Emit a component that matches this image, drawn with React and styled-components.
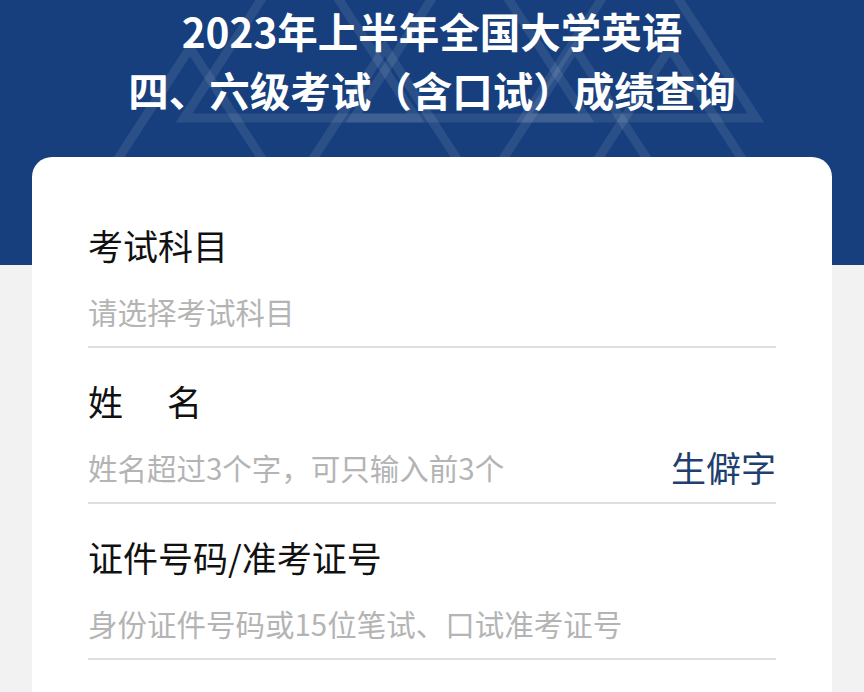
import React from 'react';
import styled, { createGlobalStyle } from 'styled-components';

const GlobalStyle = createGlobalStyle`
	html, body {
		margin: 0;
		padding: 0;
		background: #f2f2f2;
		font-family: "Noto Sans CJK SC", "Noto Sans", sans-serif;
	}
`;

const fields = [
	{ label: '考试科目', placeholder: '请选择考试科目' },
	{ label: '姓名', spacing: 44, placeholder: '姓名超过3个字，可只输入前3个', action: '生僻字' },
	{ label: '证件号码/准考证号', placeholder: '身份证件号码或15位笔试、口试准考证号' },
];

// faint triangle outlines behind the title
const lower = [190, 385, 575, 670];
const upper = [300, 470, 640];

const Pattern = () => (
	<PatternSvg viewBox='0 0 864 265' preserveAspectRatio='none'>
		{lower.map((x) => (
			<polygon key={'l' + x} points={`${x},48 ${x - 76},165 ${x + 76},165`} />
		))}
		{upper.map((x) => (
			<polygon key={'u' + x} points={`${x},-60 ${x - 116},118 ${x + 116},118`} />
		))}
	</PatternSvg>
);

const App = () => {
	return (
		<>
			<GlobalStyle />
			<Page>
				<Header>
					<Pattern />
					<Title>
						2023年上半年全国大学英语
						<br />
						四、六级考试（含口试）成绩查询
					</Title>
				</Header>
				<Card>
					{fields.map((f) => (
						<Field key={f.label}>
							<Label $spacing={f.spacing}>{f.label}</Label>
							<InputRow>
								<Placeholder>{f.placeholder}</Placeholder>
								{f.action && <Action>{f.action}</Action>}
							</InputRow>
						</Field>
					))}
				</Card>
			</Page>
		</>
	);
};

export default App;

const Page = styled.div`
	width: 100%;
	min-height: 692px;
	overflow: hidden;
	background: #f2f2f2;
`;

const Header = styled.header`
	position: relative;
	height: 265px;
	background: #173f7d;
	overflow: hidden;
`;

const PatternSvg = styled.svg`
	position: absolute;
	inset: 0;
	width: 100%;
	height: 100%;

	polygon {
		fill: none;
		stroke: rgba(255, 255, 255, 0.09);
		stroke-width: 9;
	}
`;

const Title = styled.h1`
	position: relative;
	margin: 0;
	padding-top: 1px;
	text-align: center;
	color: #ffffff;
	font-size: 40.5px;
	font-weight: 700;
	line-height: 59px;
`;

const Card = styled.section`
	margin: -108px 32px 0;
	padding: 64px 56px 40px;
	background: #ffffff;
	border-radius: 20px 20px 0 0;
	position: relative;
`;

const Field = styled.div`
	& + & {
		margin-top: 29px;
	}
`;

const Label = styled.div`
	font-size: 35px;
	line-height: 48px;
	color: #111111;
	letter-spacing: ${(p) => (p.$spacing ? p.$spacing + 'px' : 'normal')};
`;

const InputRow = styled.div`
	display: flex;
	align-items: center;
	justify-content: space-between;
	padding: 20px 0 13px;
	border-bottom: 2px solid #dedede;
`;

const Placeholder = styled.span`
	font-size: 29.5px;
	line-height: 44px;
	color: #b4b4b4;
`;

const Action = styled.span`
	font-size: 35px;
	line-height: 44px;
	color: #1f3f6e;
`;
